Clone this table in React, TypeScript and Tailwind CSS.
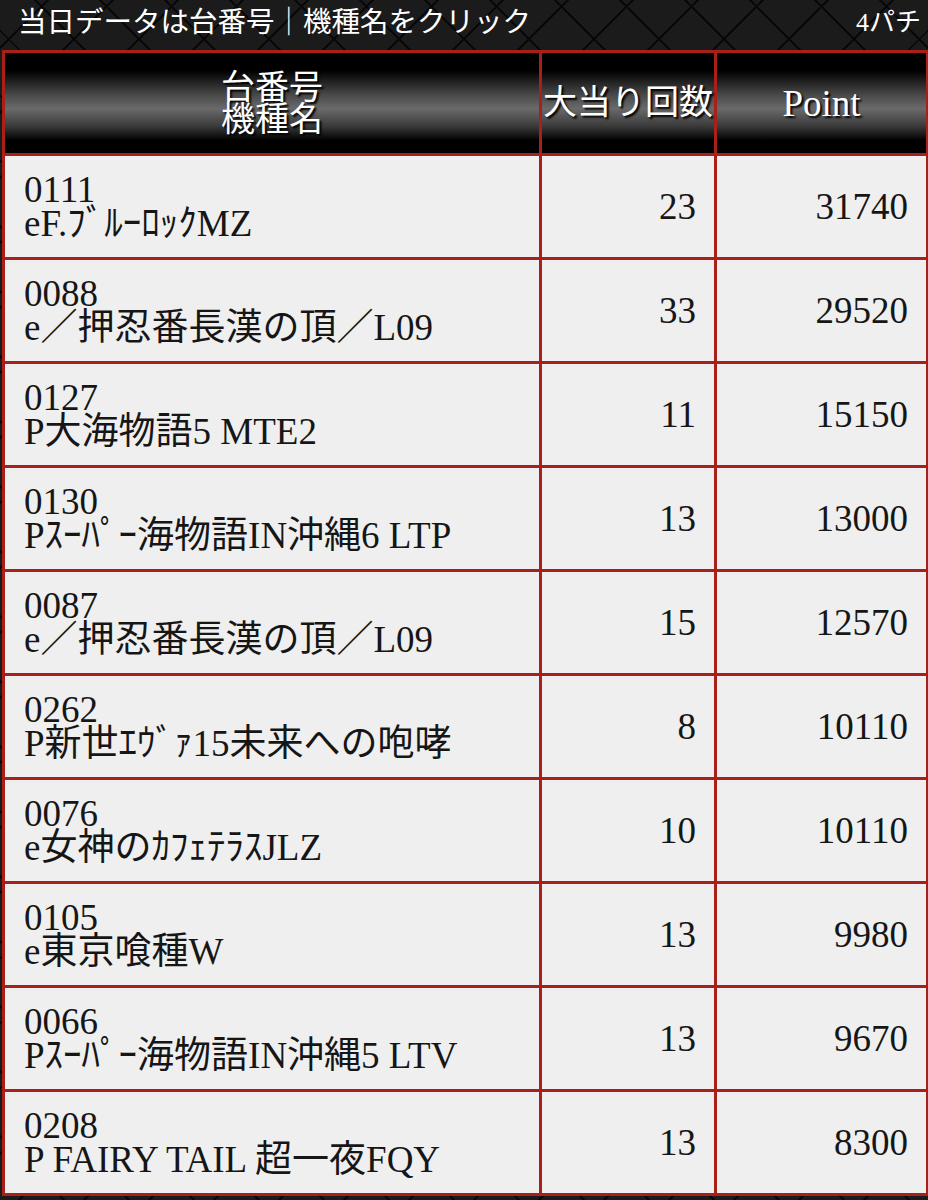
const rows = [
  { no: "0111", name: "eF.ﾌﾞﾙｰﾛｯｸMZ", hits: 23, point: 31740 },
  { no: "0088", name: "e／押忍番長漢の頂／L09", hits: 33, point: 29520 },
  { no: "0127", name: "P大海物語5 MTE2", hits: 11, point: 15150 },
  { no: "0130", name: "Pｽｰﾊﾟｰ海物語IN沖縄6 LTP", hits: 13, point: 13000 },
  { no: "0087", name: "e／押忍番長漢の頂／L09", hits: 15, point: 12570 },
  { no: "0262", name: "P新世ｴｳﾞｧ15未来への咆哮", hits: 8, point: 10110 },
  { no: "0076", name: "e女神のｶﾌｪﾃﾗｽJLZ", hits: 10, point: 10110 },
  { no: "0105", name: "e東京喰種W", hits: 13, point: 9980 },
  { no: "0066", name: "Pｽｰﾊﾟｰ海物語IN沖縄5 LTV", hits: 13, point: 9670 },
  { no: "0208", name: "P FAIRY TAIL 超一夜FQY", hits: 13, point: 8300 },
];

const App = () => {
  return (
    <div className="w-[928px] h-[1200px] overflow-hidden bg-[#1b1b1b] bg-[image:repeating-linear-gradient(45deg,transparent_0_44px,#080808_44px_46px),repeating-linear-gradient(-45deg,transparent_0_44px,#080808_44px_46px)] font-['Liberation_Serif','Noto_Sans_CJK_JP',serif]">
      <div className="h-[50px] flex items-center justify-between pl-[18px] pr-[7px] pb-[4px] text-white text-[28.5px] leading-none">
        <span>当日データは台番号｜機種名をクリック</span>
        <span className="text-[26px]">4パチ</span>
      </div>
      <table className="ml-[2px] w-[924px] border-collapse table-fixed">
        <colgroup>
          <col className="w-[537px]" />
          <col className="w-[175px]" />
          <col className="w-[212px]" />
        </colgroup>
        <thead>
          <tr className="h-[103px] bg-[linear-gradient(to_bottom,#000_0%,#000_18%,#4a4a4a_42%,#6a6a6a_55%,#3a3a3a_72%,#000_86%,#000_100%)] text-white [text-shadow:2px_2px_2px_#000]">
            <th className="border-[3px] border-[#a8201a] font-normal text-[34px] pt-[2px]">
              <div className="h-[32px] leading-[32px]">台番号</div>
              <div className="h-[32px] leading-[32px]">機種名</div>
            </th>
            <th className="border-[3px] border-[#a8201a] font-normal text-[34px] leading-none whitespace-nowrap">
              大当り回数
            </th>
            <th className="border-[3px] border-[#a8201a] font-normal text-[37px] leading-none">
              Point
            </th>
          </tr>
        </thead>
        <tbody>
          {rows.map((r, i) => (
            <tr key={i} className="h-[104px] bg-[#efefef] text-[#161616]">
              <td className="border-[3px] border-[#a8201a] pl-[19px] text-[37px] whitespace-nowrap">
                <div className="h-[34px] leading-[34px]">{r.no}</div>
                <div className="h-[34px] leading-[34px]">{r.name}</div>
              </td>
              <td className="border-[3px] border-[#a8201a] pr-[18px] text-right text-[37px]">
                {r.hits}
              </td>
              <td className="border-[3px] border-[#a8201a] pr-[18px] text-right text-[37px]">
                {r.point}
              </td>
            </tr>
          ))}
        </tbody>
      </table>
    </div>
  );
};

export default App;
